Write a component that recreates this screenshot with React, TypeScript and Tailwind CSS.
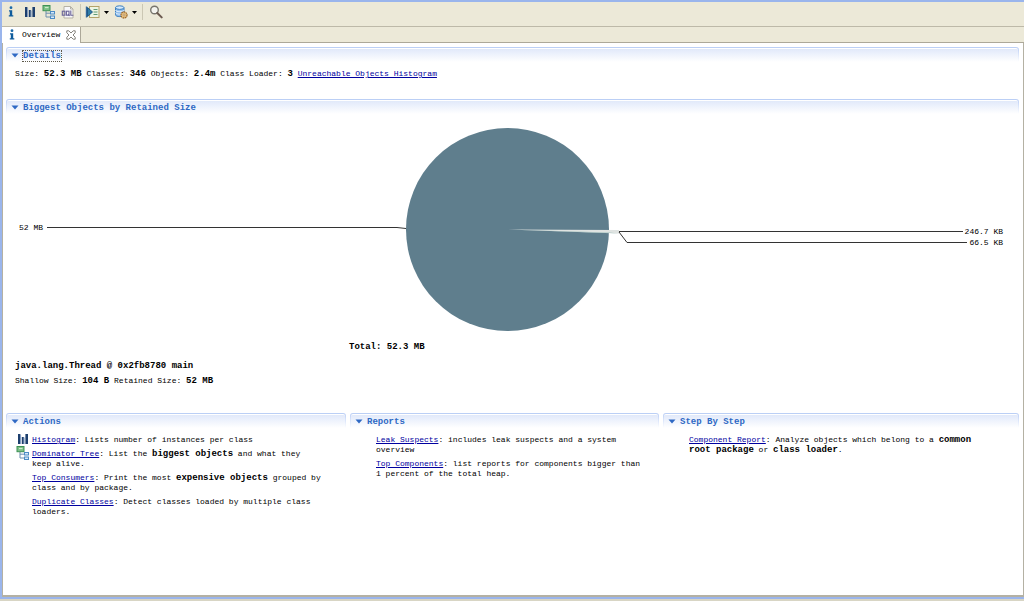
import type { ReactNode } from 'react';

function InfoIcon() {
  return (
    <svg width="16" height="16" viewBox="0 0 16 16" aria-hidden="true">
      <circle cx="8" cy="3.7" r="1.4" fill="#1c6aa8" />
      <path d="M6 6.2h3.2v5h1.1v1.3H5.8v-1.3h1V7.4H6z" fill="#0f5c9c" />
    </svg>
  );
}

function HistogramIcon() {
  return (
    <svg width="16" height="16" viewBox="0 0 16 16" aria-hidden="true">
      <path d="M3 3h2.4v10H3zM6.8 6h2v7h-2zM10.4 3H13v10h-2.6z" fill="#1d3f6e" />
      <path d="M5.6 4v9M9.2 6.5V13" stroke="#7f9cc4" strokeWidth="0.9" />
    </svg>
  );
}

function TreeIcon() {
  return (
    <svg width="16" height="16" viewBox="0 0 16 16" aria-hidden="true">
      <path d="M5 7v6h5M5 9.2h5" fill="none" stroke="#6d8fae" />
      <rect x="2" y="1.5" width="7" height="5.2" fill="#7cbf86" stroke="#3f9156" />
      <path d="M4 3.6h3.5" stroke="#d4efd2" />
      <rect x="9.5" y="7.5" width="4" height="2.5" fill="#d6e9fa" stroke="#4d8bc4" />
      <rect x="9.5" y="12" width="4" height="2.5" fill="#d6e9fa" stroke="#4d8bc4" />
    </svg>
  );
}

function OqlIcon() {
  return (
    <svg width="16" height="16" viewBox="0 0 16 16" aria-hidden="true">
      <path d="M4 2.5h6.5L13 5v9H4z" fill="#f7f7fb" stroke="#b5b1a5" />
      <path d="M10.5 2.5V5H13" fill="none" stroke="#b5b1a5" />
      <g fill="none" stroke="#6a6399" strokeWidth="1.1">
        <rect x="2.3" y="7.2" width="2.6" height="4" />
        <rect x="6.4" y="7.2" width="2.6" height="4" />
        <path d="M8 10l1.5 2M10.8 6.6v4.6h2.6" />
      </g>
    </svg>
  );
}

function RunReportIcon() {
  return (
    <svg width="16" height="16" viewBox="0 0 16 16" aria-hidden="true">
      <rect x="4.5" y="2.5" width="9.5" height="11" fill="#eef5e4" stroke="#b3a36a" />
      <path d="M8.5 5.5h4M8.5 8h4M8.5 10.5h4" stroke="#5e9a77" />
      <path d="M1.5 2.5v11" stroke="#33679c" strokeWidth="1.4" />
      <path d="M2.5 3.5L7.5 8l-5 4.5z" fill="#2f7ca8" stroke="#1d5886" />
    </svg>
  );
}

function DatabaseIcon() {
  return (
    <svg width="16" height="16" viewBox="0 0 16 16" aria-hidden="true">
      <path d="M2.5 3.6v7.2c0 2.4 8.5 2.4 8.5 0V3.6z" fill="#8fbdec" stroke="#3b7fc0" />
      <ellipse cx="6.7" cy="3.6" rx="4.2" ry="1.8" fill="#d5e9fb" stroke="#3b7fc0" />
      <path d="M2.5 6c0 2.2 8.5 2.2 8.5 0M2.5 8.5c0 2.2 8.5 2.2 8.5 0" fill="none" stroke="#e4f1fd" />
      <circle cx="11" cy="11" r="3" fill="#f1d190" stroke="#a06a2c" strokeWidth="1.3" strokeDasharray="1.7 0.5" />
      <circle cx="11" cy="11" r="1.1" fill="#fff" stroke="#a06a2c" strokeWidth="0.7" />
    </svg>
  );
}

function SearchIcon() {
  return (
    <svg width="16" height="16" viewBox="0 0 16 16" aria-hidden="true">
      <circle cx="7.5" cy="6" r="3.8" fill="#f3f3ee" stroke="#77756d" strokeWidth="1.4" />
      <path d="M10.3 9l4.4 4.4" stroke="#6b5a50" strokeWidth="2" strokeLinecap="round" />
    </svg>
  );
}

function Triangle() {
  return (
    <svg width="8" height="5" viewBox="0 0 8 5" aria-hidden="true">
      <path d="M0.5 0.5h7L4 4.5z" fill="currentColor" />
    </svg>
  );
}

function ToolButton({ label, children }: { label: string; children: ReactNode }) {
  return (
    <button type="button" aria-label={label} className="h-4 w-4">
      {children}
    </button>
  );
}

function MenuArrow({ label }: { label: string }) {
  return (
    <button type="button" aria-label={label} className="flex h-4 w-2 items-center justify-center text-black">
      <svg width="5" height="3" viewBox="0 0 5 3" aria-hidden="true">
        <path d="M0 0h5L2.5 3z" fill="currentColor" />
      </svg>
    </button>
  );
}

function Separator() {
  return <span className="mx-px h-4 w-px bg-[#cbc7b4]" />;
}

function Toolbar() {
  return (
    <div className="flex h-6 items-start gap-[3px] pt-0.5 pl-px">
      <ToolButton label="Overview"><InfoIcon /></ToolButton>
      <ToolButton label="Histogram"><HistogramIcon /></ToolButton>
      <ToolButton label="Dominator tree"><TreeIcon /></ToolButton>
      <ToolButton label="OQL"><OqlIcon /></ToolButton>
      <Separator />
      <div className="flex gap-px">
        <ToolButton label="Run report"><RunReportIcon /></ToolButton>
        <MenuArrow label="Reports menu" />
      </div>
      <div className="flex gap-px">
        <ToolButton label="Query browser"><DatabaseIcon /></ToolButton>
        <MenuArrow label="Query menu" />
      </div>
      <Separator />
      <ToolButton label="Find object"><SearchIcon /></ToolButton>
    </div>
  );
}

function Tabs() {
  return (
    <div className="flex h-[17px] border-t border-[#bdb9a8]">
      <div className="flex items-center bg-white pr-1 pl-0.5">
        <InfoIcon />
        <span className="ml-0.5 text-[8px] leading-[10px]">Overview</span>
        <button type="button" aria-label="Close Overview" className="ml-1.5">
          <svg width="10" height="10" viewBox="0 0 10 10" aria-hidden="true">
            <path
              d="M0.8 0.8h2L5 3l2.2-2.2h2v2L7 5l2.2 2.2v2h-2L5 7 2.8 9.2h-2v-2L3 5 0.8 2.8z"
              fill="#fff"
              stroke="#77756d"
              strokeWidth="0.9"
            />
          </svg>
        </button>
      </div>
      <div className="flex-1 border-b border-l border-[#aca899]" />
    </div>
  );
}

interface SectionProps {
  title: string;
  focused?: boolean;
  className?: string;
  children: ReactNode;
}

function Section({ title, focused, className, children }: SectionProps) {
  return (
    <section className={className}>
      <div className="rounded-t-[3px] bg-gradient-to-b from-[#b9cdf5] to-white px-px pt-px">
        <h2 className="flex h-3.5 items-center gap-1 rounded-t-[2px] border-t border-white bg-gradient-to-b from-[#e1e9fa] to-white pl-1 text-[#2f69c4]">
          <Triangle />
          <span
            className={
              focused
                ? 'text-[9px] leading-[10px] font-bold outline-1 outline-dotted outline-[#5f5a4a]'
                : 'text-[9px] leading-[10px] font-bold'
            }
          >
            {title}
          </span>
        </h2>
      </div>
      {children}
    </section>
  );
}

function Link({ children }: { children: ReactNode }) {
  return <a href="#" className="text-[#0000a0] underline">{children}</a>;
}

function B({ children }: { children: ReactNode }) {
  return <b className="text-[9px] leading-[10px]">{children}</b>;
}

function Item({ icon, children }: { icon?: ReactNode; children: ReactNode }) {
  return (
    <li className="flex">
      <span className="-mt-1 -ml-0.5 h-3.5 w-[17px] shrink-0">{icon}</span>
      <p>{children}</p>
    </li>
  );
}

function ItemList({ children }: { children: ReactNode }) {
  return <ul className="flex flex-col gap-1 pt-[7px] pl-[11px]">{children}</ul>;
}

function RetainedSizeChart() {
  return (
    <svg
      className="block h-auto w-full"
      viewBox="0 -1 1013 242"
      role="img"
      aria-label="Biggest objects by retained size"
    >
      <circle cx="501.5" cy="114.5" r="101.5" fill="#5f7e8d" />
      <path d="M502 114.5L613 115v3.5z" fill="#dfe3e1" />
      <path d="M502 114.5L603 117.5l10 1-10-.5z" fill="#9fc0bd" />
      <g fill="none" stroke="#333" strokeWidth="1">
        <path d="M41 112.5h350l9 1" />
        <path d="M613 116.500h344" />
        <path d="M613 117l8 10.500h340" />
      </g>
      <g fontSize="8" fill="#000">
        <text x="13" y="115">52 MB</text>
        <text x="997" y="119" textAnchor="end">246.7 KB</text>
        <text x="997" y="130" textAnchor="end">66.5 KB</text>
      </g>
      <text x="343" y="234" fontSize="9" fontWeight="bold">Total: 52.3 MB</text>
    </svg>
  );
}

export default function App() {
  return (
    <div className="flex min-h-screen flex-col border-b-2 border-[#d8d5c4] bg-white font-['Liberation_Mono',monospace] text-[8px] leading-[10px] text-black">
      <div className="flex flex-1 flex-col border-2 border-r-0 border-[#9ab5ec]">
        <header className="bg-[#ece9d8]">
          <Toolbar />
          <Tabs />
        </header>
        <main className="flex-1 border-r border-b-2 border-l border-[#b4b1a3] pt-1 pr-1 pl-[3px]">
          <Section title="Details" focused className="pb-5">
            <p className="pt-[7px] pl-[9px]">
              Size: <B>52.3 MB</B> Classes: <B>346</B> Objects: <B>2.4m</B> Class Loader: <B>3</B>{' '}
              <Link>Unreachable Objects Histogram</Link>
            </p>
          </Section>

          <Section title="Biggest Objects by Retained Size" className="pb-[27px]">
            <RetainedSizeChart />
            <h3 className="pt-[5px] pl-[9px] text-[9px] leading-[10px] font-bold">
              java.lang.Thread @ 0x2fb8780 main
            </h3>
            <p className="pt-[5px] pl-[9px]">
              Shallow Size: <B>104 B</B> Retained Size: <B>52 MB</B>
            </p>
          </Section>

          <div className="grid grid-cols-[340fr_309fr_356fr] gap-1">
            <Section title="Actions">
              <ItemList>
                <Item icon={<HistogramIcon />}>
                  <Link>Histogram</Link>: Lists number of instances per class
                </Item>
                <Item icon={<TreeIcon />}>
                  <Link>Dominator Tree</Link>: List the <B>biggest objects</B> and what they
                  <br />
                  keep alive.
                </Item>
                <Item>
                  <Link>Top Consumers</Link>: Print the most <B>expensive objects</B> grouped by
                  <br />
                  class and by package.
                </Item>
                <Item>
                  <Link>Duplicate Classes</Link>: Detect classes loaded by multiple class
                  <br />
                  loaders.
                </Item>
              </ItemList>
            </Section>

            <Section title="Reports">
              <ItemList>
                <Item>
                  <Link>Leak Suspects</Link>: includes leak suspects and a system
                  <br />
                  overview
                </Item>
                <Item>
                  <Link>Top Components</Link>: list reports for components bigger than
                  <br />1 percent of the total heap.
                </Item>
              </ItemList>
            </Section>

            <Section title="Step By Step">
              <ItemList>
                <Item>
                  <Link>Component Report</Link>: Analyze objects which belong to a <B>common</B>
                  <br />
                  <B>root package</B> or <B>class loader</B>.
                </Item>
              </ItemList>
            </Section>
          </div>
        </main>
      </div>
    </div>
  );
}
